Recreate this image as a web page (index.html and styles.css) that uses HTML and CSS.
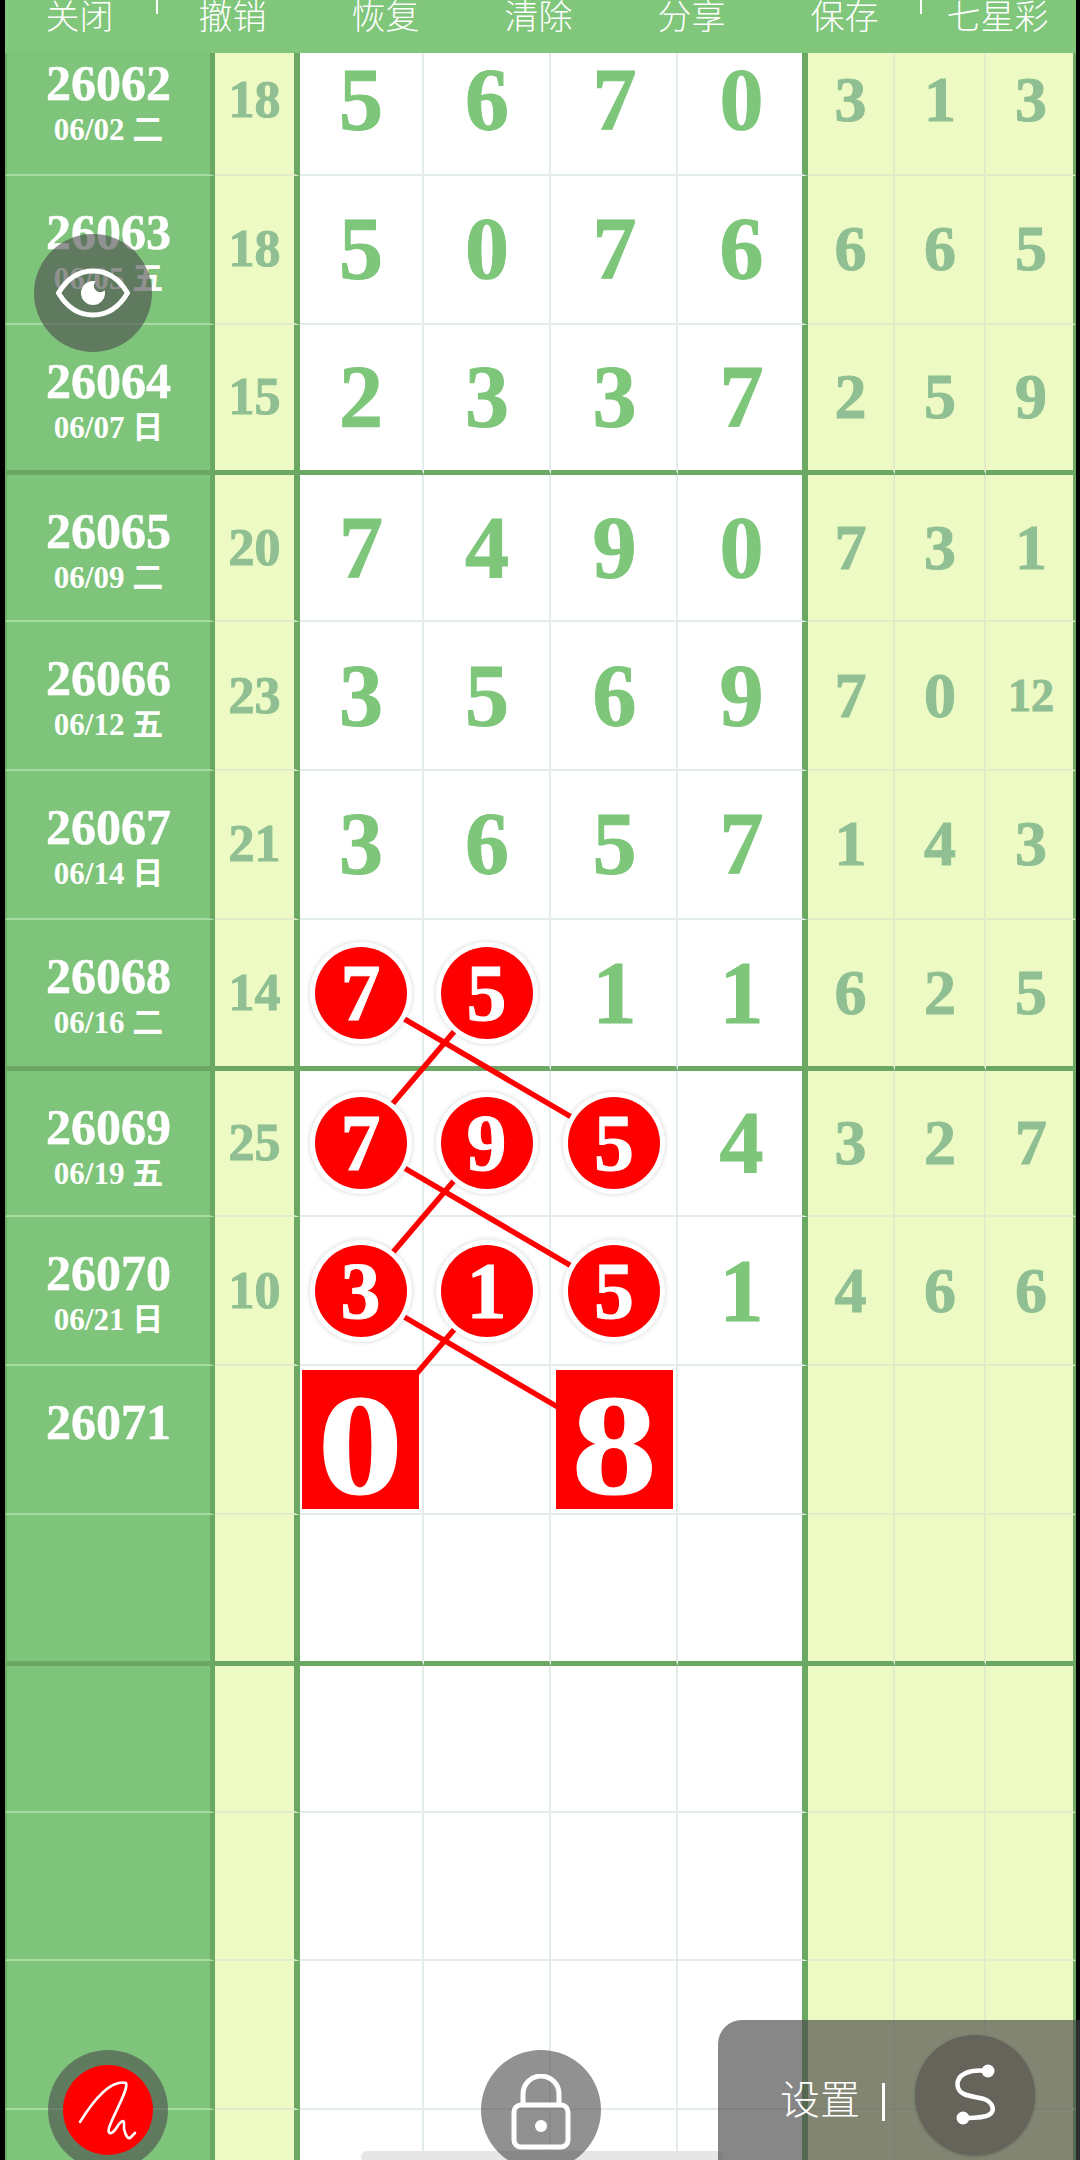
FILE: index.html
```html
<!DOCTYPE html>
<html lang="zh">
<head>
<meta charset="utf-8">
<title>七星彩</title>
<link rel="stylesheet" href="styles.css">
</head>
<body>
<div class="page">
  <header class="topbar">
    <span>关闭</span><span>撤销</span><span>恢复</span><span>清除</span><span>分享</span><span>保存</span><span>七星彩</span>
    <i class="tick tick-a"></i><i class="tick tick-b"></i>
  </header>
  <main class="board">
    <div class="rows">
      <div class="row"><div class="c id"><b>26062</b><small>06/02 二</small></div><div class="c sum">18</div><div class="c d1">5</div><div class="c d2">6</div><div class="c d3">7</div><div class="c d4">0</div><div class="c r1">3</div><div class="c r2">1</div><div class="c r3">3</div></div>
      <div class="row"><div class="c id"><b>26063</b><small>06/05 五</small></div><div class="c sum">18</div><div class="c d1">5</div><div class="c d2">0</div><div class="c d3">7</div><div class="c d4">6</div><div class="c r1">6</div><div class="c r2">6</div><div class="c r3">5</div></div>
      <div class="row major"><div class="c id"><b>26064</b><small>06/07 日</small></div><div class="c sum">15</div><div class="c d1">2</div><div class="c d2">3</div><div class="c d3">3</div><div class="c d4">7</div><div class="c r1">2</div><div class="c r2">5</div><div class="c r3">9</div></div>
      <div class="row"><div class="c id"><b>26065</b><small>06/09 二</small></div><div class="c sum">20</div><div class="c d1">7</div><div class="c d2">4</div><div class="c d3">9</div><div class="c d4">0</div><div class="c r1">7</div><div class="c r2">3</div><div class="c r3">1</div></div>
      <div class="row"><div class="c id"><b>26066</b><small>06/12 五</small></div><div class="c sum">23</div><div class="c d1">3</div><div class="c d2">5</div><div class="c d3">6</div><div class="c d4">9</div><div class="c r1">7</div><div class="c r2">0</div><div class="c r3 small-num">12</div></div>
      <div class="row"><div class="c id"><b>26067</b><small>06/14 日</small></div><div class="c sum">21</div><div class="c d1">3</div><div class="c d2">6</div><div class="c d3">5</div><div class="c d4">7</div><div class="c r1">1</div><div class="c r2">4</div><div class="c r3">3</div></div>
      <div class="row major"><div class="c id"><b>26068</b><small>06/16 二</small></div><div class="c sum">14</div><div class="c d1"><span class="ball">7</span></div><div class="c d2"><span class="ball">5</span></div><div class="c d3">1</div><div class="c d4">1</div><div class="c r1">6</div><div class="c r2">2</div><div class="c r3">5</div></div>
      <div class="row"><div class="c id"><b>26069</b><small>06/19 五</small></div><div class="c sum">25</div><div class="c d1"><span class="ball">7</span></div><div class="c d2"><span class="ball">9</span></div><div class="c d3"><span class="ball">5</span></div><div class="c d4">4</div><div class="c r1">3</div><div class="c r2">2</div><div class="c r3">7</div></div>
      <div class="row"><div class="c id"><b>26070</b><small>06/21 日</small></div><div class="c sum">10</div><div class="c d1"><span class="ball">3</span></div><div class="c d2"><span class="ball">1</span></div><div class="c d3"><span class="ball">5</span></div><div class="c d4">1</div><div class="c r1">4</div><div class="c r2">6</div><div class="c r3">6</div></div>
      <div class="row"><div class="c id"><b>26071</b></div><div class="c sum"></div><div class="c d1"><span class="pick"><span class="wide">0</span></span></div><div class="c d2"></div><div class="c d3"><span class="pick"><span class="wide">8</span></span></div><div class="c d4"></div><div class="c r1"></div><div class="c r2"></div><div class="c r3"></div></div>
      <div class="row major"><div class="c id"></div><div class="c sum"></div><div class="c d1"></div><div class="c d2"></div><div class="c d3"></div><div class="c d4"></div><div class="c r1"></div><div class="c r2"></div><div class="c r3"></div></div>
      <div class="row"><div class="c id"></div><div class="c sum"></div><div class="c d1"></div><div class="c d2"></div><div class="c d3"></div><div class="c d4"></div><div class="c r1"></div><div class="c r2"></div><div class="c r3"></div></div>
      <div class="row"><div class="c id"></div><div class="c sum"></div><div class="c d1"></div><div class="c d2"></div><div class="c d3"></div><div class="c d4"></div><div class="c r1"></div><div class="c r2"></div><div class="c r3"></div></div>
      <div class="row"><div class="c id"></div><div class="c sum"></div><div class="c d1"></div><div class="c d2"></div><div class="c d3"></div><div class="c d4"></div><div class="c r1"></div><div class="c r2"></div><div class="c r3"></div></div>
      <div class="row"><div class="c id"></div><div class="c sum"></div><div class="c d1"></div><div class="c d2"></div><div class="c d3"></div><div class="c d4"></div><div class="c r1"></div><div class="c r2"></div><div class="c r3"></div></div>
    </div>
  </main>

  <svg class="links" viewBox="0 0 1080 2160" width="1080" height="2160" aria-hidden="true">
    <g stroke="#f00" stroke-width="5.500" fill="none">
      <line x1="360" y1="993" x2="614" y2="1142"/>
      <line x1="487" y1="993" x2="360" y2="1142"/>
      <line x1="360" y1="1142" x2="614" y2="1291"/>
      <line x1="487" y1="1142" x2="360" y2="1291"/>
      <line x1="360" y1="1291" x2="614" y2="1440"/>
      <line x1="487" y1="1291" x2="360" y2="1440"/>
    </g>
  </svg>

  <div class="fab eye">
    <svg viewBox="0 0 74 50" width="74" height="50" aria-hidden="true">
      <path d="M2.500 25C12 9 24 3 37 3s25 6 34.500 22C62 41 50 47 37 47S12 41 2.500 25Z" fill="none" stroke="#fff" stroke-width="5" stroke-linejoin="round"/>
      <path d="M37 13a12 12 0 1 0 12 12c0-1-.1-2-.3-2.700a6 6 0 0 1-9-9A12 12 0 0 0 37 13Z" fill="#fff"/>
    </svg>
  </div>
  <div class="home-bar"></div>
  <div class="fab pen">
    <span class="pen-dot">
      <svg viewBox="0 0 90 90" width="90" height="90" aria-hidden="true">
        <path d="M17 57C30 36 48 14 63 18c3 6-12 30-17 45-2 8 4 6 8-1 3-5 7-8 7-4-1 8 3 16 6 15l5-5" fill="none" stroke="#fff" stroke-width="2.600" stroke-linecap="round" stroke-linejoin="round"/>
      </svg>
    </span>
  </div>
  <div class="fab lock">
    <svg viewBox="0 0 60 76" width="60" height="76" aria-hidden="true">
      <path d="M12 32V20a18 18 0 0 1 36 0v12" fill="none" stroke="#fff" stroke-width="5"/>
      <rect x="3" y="31" width="54" height="42" rx="7" fill="none" stroke="#fff" stroke-width="5"/>
      <circle cx="30" cy="52" r="6" fill="#fff"/>
    </svg>
  </div>
  <div class="panel">
    <span class="panel-label">设置</span>
    <i class="panel-sep"></i>
    <span class="s-btn">
      <svg viewBox="0 0 60 70" width="60" height="70" aria-hidden="true">
        <path d="M42 11C25 9 12 14 12.500 25C13 37 30 36 39 39C47 42 49 48 47 52C44 58 30 58 18 58" fill="none" stroke="#fff" stroke-width="4.500" stroke-linecap="round"/>
        <circle cx="43" cy="11" r="6.500" fill="#fff"/>
        <circle cx="18" cy="58" r="6.500" fill="#fff"/>
      </svg>
    </span>
  </div>
</div>
</body>
</html>
```

FILE: styles.css
```css
* { box-sizing: border-box; }
html, body { margin: 0; background: #000; }
.page {
  position: relative;
  width: 1080px;
  height: 2160px;
  overflow: hidden;
  padding: 0 4px 0 5px;
  font-family: "Liberation Serif", "Noto Sans CJK SC", serif;
  background: #000;
}

.topbar {
  position: relative;
  z-index: 3;
  height: 53px;
  overflow: hidden;
  background: #80c67b;
  display: grid;
  grid-template-columns: repeat(7, 153px);
  justify-items: center;
  color: #fff;
  font-family: "Noto Sans CJK SC", "Noto Sans", sans-serif;
  font-weight: 300;
  font-size: 34px;
  line-height: 34px;
}
.topbar span { margin-left: -4px; margin-top: -2px; white-space: nowrap; }
.tick { position: absolute; top: 0; width: 2px; height: 14px; background: #fff; }
.tick-a { left: 151px; }
.tick-b { left: 915px; }

.board { height: 2107px; overflow: hidden; }
.rows { margin-top: -26px; }
.row {
  display: grid;
  grid-template-columns: 210px 85px 124px 127px 127px 130px 87px 91px 90px;
  height: 148.8px;
}
.row.major { height: 150.800px; }
.row.major + .row { height: 146.800px; }

.c {
  display: flex;
  align-items: center;
  justify-content: center;
  border-bottom: 2px solid #e3ecea;
  border-right: 2px solid #e3ecea;
  font-weight: 700;
  line-height: 1;
  background: #fff;
  color: #7dc67a;
  font-size: 88px;
  -webkit-text-stroke: 1px currentColor;
}
.id {
  flex-direction: column;
  justify-content: flex-start;
  padding-top: 31px;
  background: #7ec57b;
  color: #fff;
  border-left: 2px solid #6aae66;
  border-right: 5px solid #6aa864;
  border-bottom-color: #a5dba2;
  -webkit-text-stroke: 0.5px currentColor;
}
.id b { font-size: 50px; line-height: 50px; }
.id small { font-size: 31px; line-height: 36px; margin-top: 4px; font-weight: 700; -webkit-text-stroke: 0; }

.sum, .r1, .r2, .r3 {
  background: #edfac3;
  color: #8fbf92;
  border-bottom-color: #e0edc8;
  border-right-color: #e0edc8;
}
.sum { font-size: 52px; border-right: 6px solid #6aa864; }
.d2, .r2 { padding-left: 1px; }
.d3 { padding-left: 2px; }
.d4 { border-right: 6px solid #6aa864; padding-left: 3px; }
.r1, .r2, .r3 { font-size: 64px; }
.r3 { border-right: 3px solid #6aa864; padding-left: 3px; }
.small-num { font-size: 46px; }

.major .c { border-bottom: 5px solid #6aa864; }

.ball {
  position: relative;
  z-index: 2;
  width: 92px;
  height: 92px;
  border-radius: 50%;
  display: flex;
  align-items: center;
  justify-content: center;
  background: #f00;
  color: #fff;
  font-size: 80px;
  box-shadow: 0 0 0 5px #fff, 0 0 4px 6px rgba(0, 0, 0, .12);
}
.pick {
  position: relative;
  z-index: 2;
  width: 117px;
  height: 139px;
  display: flex;
  align-items: center;
  justify-content: center;
  padding-top: 12px;
  background: #f00;
  color: #fff;
  font-size: 145px;
  font-weight: 700;
}
.wide { display: block; transform: scaleX(1.18); }
.c .ball, .c .pick { margin-right: 1px; }

.links { position: absolute; left: 0; top: 0; z-index: 1; pointer-events: none; }

.fab {
  position: absolute;
  z-index: 4;
  width: 120px;
  height: 120px;
  border-radius: 50%;
  background: rgba(75, 75, 75, .61);
  display: flex;
  align-items: center;
  justify-content: center;
}
.eye { left: 34px; top: 234px; width: 118px; height: 118px; }
.pen { left: 48px; top: 2050px; }
.lock { left: 481px; top: 2050px; }
.lock svg { margin-top: 3px; }
.pen-dot {
  width: 90px;
  height: 90px;
  border-radius: 50%;
  background: #f00;
  display: block;
}
.pen-dot svg { display: block; }

.home-bar {
  position: absolute;
  z-index: 3;
  left: 361px;
  top: 2151px;
  width: 362px;
  height: 12px;
  border-radius: 6px;
  background: #e6e6e6;
}

.panel {
  position: absolute;
  z-index: 4;
  left: 718px;
  top: 2020px;
  width: 362px;
  height: 140px;
  border-radius: 24px 0 0 0;
  background: rgba(70, 70, 70, .65);
  display: flex;
  align-items: center;
  padding: 0 43px 0 62px;
  color: #fff;
}
.panel-label {
  font-family: "Noto Sans CJK SC", "Noto Sans", sans-serif;
  font-size: 40px;
  line-height: 40px;
  font-weight: 300;
  white-space: nowrap;
  margin-top: 14px;
}
.panel-sep { width: 3px; height: 38px; margin: 24px 0 0 22px; background: #fff; }
.s-btn {
  width: 120px;
  height: 120px;
  margin: 10px 0 0 30px;
  border-radius: 50%;
  background: #65635a;
  box-shadow: 0 1px 3px rgba(0, 0, 0, .25);
  display: flex;
  align-items: center;
  justify-content: center;
  flex: none;
}
```
